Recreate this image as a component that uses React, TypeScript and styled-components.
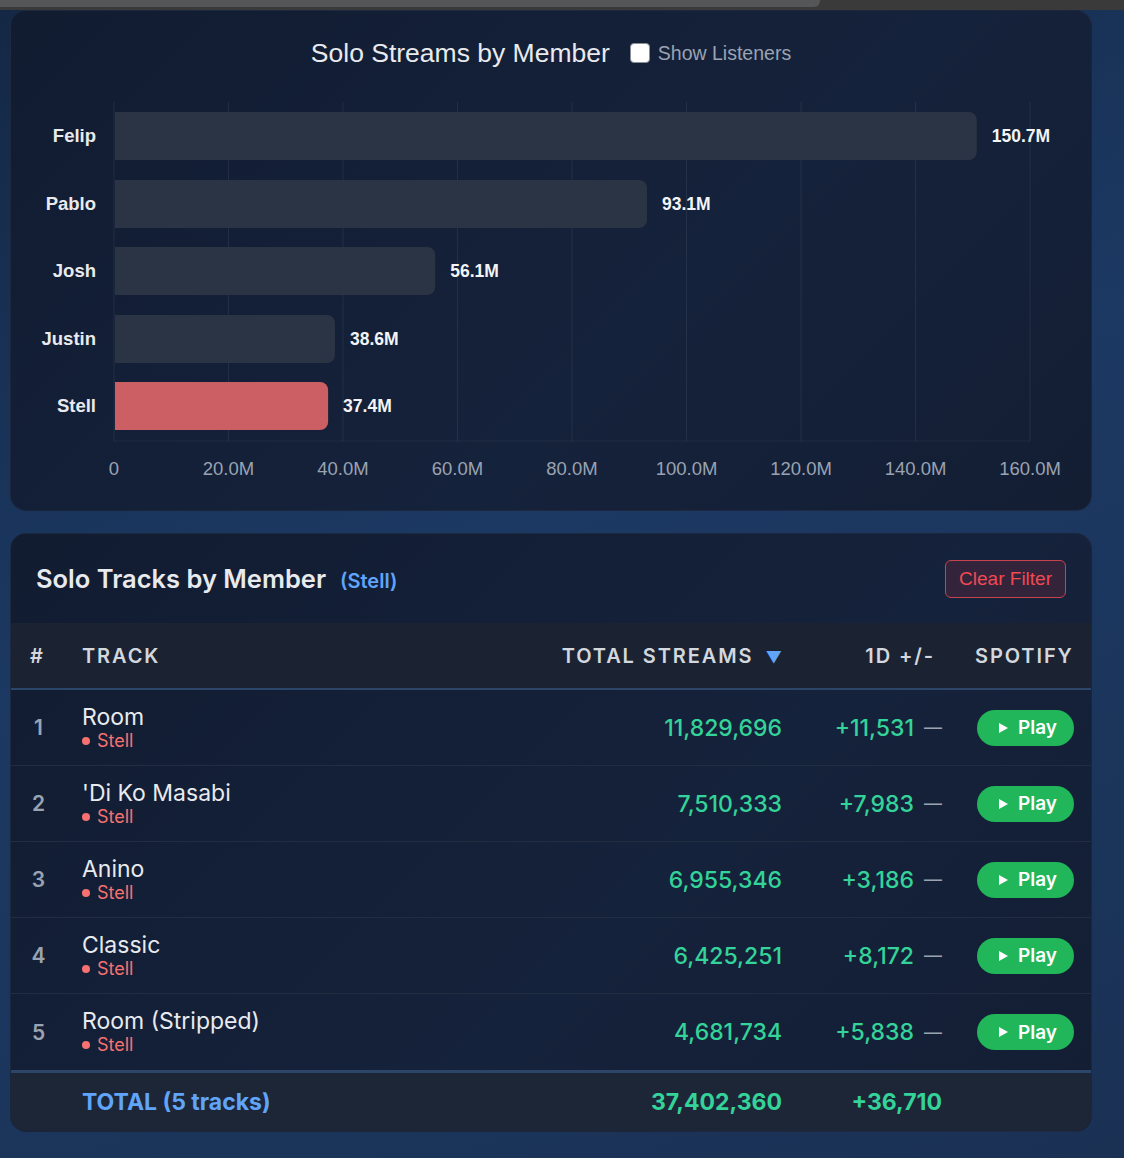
import styled, { createGlobalStyle } from 'styled-components';

const GlobalStyle = createGlobalStyle`
  * { box-sizing: border-box; }
  html, body {
    margin: 0;
    padding: 0;
  }
  body {
    min-height: 1158px;
    background: linear-gradient(160deg, #142845 0%, #1c3963 45%, #1a3154 100%);
    font-family: Inter, "Liberation Sans", sans-serif;
    color: #e5e7eb;
  }
`;

const ScrollStrip = styled.div`
  height: 10px;
  background: #3a3a3b;
  display: flex;
`;

const ScrollThumb = styled.div`
  width: 820px;
  height: 7px;
  background: #555658;
  border-bottom-right-radius: 6px;
`;

const Page = styled.main`
  padding: 0 32px 27px 10px;
  display: flex;
  flex-direction: column;
  gap: 22px;
`;

const Card = styled.section<{ $height?: number }>`
  height: ${p => (p.$height ? `${p.$height}px` : 'auto')};
  background: linear-gradient(135deg, #111c31 0%, #15223b 60%, #131e33 100%);
  border: 1px solid rgba(255, 255, 255, 0.04);
  border-radius: 16px;
  overflow: hidden;
`;

const ChartHead = styled.div`
  display: flex;
  align-items: center;
  justify-content: center;
  gap: 20px;
  padding-top: 26px;
  height: 58px;
  margin-bottom: 32px;
  font-family: "Liberation Sans", Arial, sans-serif;
`;

const ChartTitle = styled.h2`
  margin: 0;
  font-size: 26.5px;
  font-weight: 400;
  color: #e8eaee;
`;

const Toggle = styled.label`
  display: flex;
  align-items: center;
  gap: 8px;
  font-size: 19.5px;
  color: #9aa3b2;
`;

const Check = styled.input`
  appearance: none;
  margin: 0;
  width: 20px;
  height: 20px;
  border-radius: 4px;
  background: #fff;
  border: 1px solid #8a8f98;
`;

const ChartSvg = styled.svg`
  display: block;
  font-family: "Liberation Sans", Arial, sans-serif;
`;

const TableHead = styled.div`
  display: flex;
  align-items: center;
  justify-content: space-between;
  height: 89px;
  padding: 0 25px 0 25px;
`;

const TitleGroup = styled.div`
  display: flex;
  align-items: baseline;
  gap: 14px;
`;

const TableTitle = styled.h2`
  margin: 0;
  font-size: 25.5px;
  font-weight: 600;
  color: #e8eaee;
`;

const Filter = styled.span`
  font-size: 20px;
  font-weight: 600;
  color: #60a5fa;
`;

const ClearButton = styled.button`
  height: 38px;
  padding: 0 13px;
  border-radius: 6px;
  border: 1px solid #c8444c;
  background: rgba(190, 50, 60, 0.18);
  color: #f04a52;
  font-family: "Liberation Sans", Arial, sans-serif;
  font-size: 19px;
`;

const Row = styled.div<{ $kind?: 'head' | 'body' | 'total' }>`
  display: grid;
  grid-template-columns: 52px 1fr 240px 160px 132px;
  align-items: center;
  padding: 0 17px 0 19px;
  height: ${p => (p.$kind === 'head' ? '67px' : p.$kind === 'total' ? '61px' : '76px')};
  background: ${p => (p.$kind === 'head' ? '#1b2333' : p.$kind === 'total' ? '#1d2637' : 'transparent')};
  border-bottom: ${p => (p.$kind === 'head' ? '2px solid #2b4668' : p.$kind === 'total' ? 'none' : '1px solid #222d42')};
  border-top: ${p => (p.$kind === 'total' ? '3px solid #2b4668' : 'none')};
  &:nth-last-child(2) {
    border-bottom: none;
  }
`;

const HeadCell = styled.div<{ $align?: 'left' | 'right'; $inset?: number }>`
  white-space: nowrap;
  font-size: 20px;
  font-weight: 600;
  letter-spacing: 1.9px;
  color: #d3d7de;
  text-align: ${p => p.$align ?? 'left'};
  padding-right: ${p => p.$inset ?? 0}px;
`;

const SortArrow = styled.span`
  color: #60a5fa;
  font-size: 16px;
  margin-left: 12px;
  letter-spacing: 0;
`;

const SpotifyHead = styled(HeadCell)`
  padding-left: 33px;
`;

const Num = styled.div`
  width: 17px;
  text-align: center;
  font-size: 21px;
  font-weight: 600;
  color: #9aa3b2;
`;

const Track = styled.div`
  display: flex;
  flex-direction: column;
`;

const TrackName = styled.span`
  font-size: 23px;
  line-height: 26px;
  color: #e8eaee;
`;

const Artist = styled.span`
  display: flex;
  align-items: center;
  gap: 7px;
  font-size: 18px;
  line-height: 22px;
  color: #f87171;
  &::before {
    content: '';
    width: 8px;
    height: 8px;
    border-radius: 50%;
    background: #f87171;
  }
`;

const Streams = styled.div<{ $bold?: boolean }>`
  text-align: right;
  font-size: 23px;
  font-weight: ${p => (p.$bold ? 700 : 500)};
  color: #34d399;
`;

const Change = styled.div`
  display: flex;
  justify-content: flex-end;
  align-items: center;
  gap: 10px;
  font-size: 23px;
  font-weight: 500;
  color: #34d399;
`;

const Dash = styled.span`
  color: #9aa3b2;
  font-size: 18px;
  font-weight: 400;
`;

const SpotifyCell = styled.div`
  padding-left: 35px;
`;

const PlayButton = styled.button`
  display: flex;
  align-items: center;
  gap: 10px;
  width: 97px;
  height: 36px;
  padding: 0 0 0 22px;
  border: none;
  border-radius: 18px;
  background: #21b659;
  color: #fff;
  font-family: Inter, "Liberation Sans", sans-serif;
  font-size: 19px;
  font-weight: 600;
`;

const TotalLabel = styled.div`
  font-size: 23px;
  font-weight: 700;
  color: #60a5fa;
`;

const members = [
  { name: 'Felip', value: 150.7, selected: false },
  { name: 'Pablo', value: 93.1, selected: false },
  { name: 'Josh', value: 56.1, selected: false },
  { name: 'Justin', value: 38.6, selected: false },
  { name: 'Stell', value: 37.4, selected: true },
];

const tracks = [
  { title: 'Room', streams: '11,829,696', change: '+11,531' },
  { title: "'Di Ko Masabi", streams: '7,510,333', change: '+7,983' },
  { title: 'Anino', streams: '6,955,346', change: '+3,186' },
  { title: 'Classic', streams: '6,425,251', change: '+8,172' },
  { title: 'Room (Stripped)', streams: '4,681,734', change: '+5,838' },
];

// chart geometry, svg coords = page coords shifted by (11, 101)
const X0 = 103;
const PX_PER_M = 916 / 160;
const BAR_H = 48;
const barTops = [11, 79, 146, 214, 281];

const barPath = (x0: number, x1: number, y: number, h: number, r: number) =>
  `M${x0} ${y}H${x1 - r}A${r} ${r} 0 0 1 ${x1} ${y + r}V${y + h - r}A${r} ${r} 0 0 1 ${x1 - r} ${y + h}H${x0}Z`;

const StreamsChart = () => {
  const ticks = Array.from({ length: 9 }, (_, i) => i * 20);
  return (
    <ChartSvg width={1080} height={395} viewBox="0 0 1080 395">
      {ticks.map(t => (
        <line
          key={t}
          x1={X0 + t * PX_PER_M}
          x2={X0 + t * PX_PER_M}
          y1={1}
          y2={340}
          stroke="rgba(255,255,255,0.07)"
          strokeWidth={1}
        />
      ))}
      <line x1={X0} x2={X0 + 160 * PX_PER_M} y1={340} y2={340} stroke="rgba(255,255,255,0.05)" />
      {members.map((m, i) => {
        const y = barTops[i];
        const x1 = X0 + m.value * PX_PER_M;
        return (
          <g key={m.name}>
            <path d={barPath(X0 + 1, x1, y, BAR_H, 8)} fill={m.selected ? '#cc5f64' : '#2b3444'} />
            <text x={85} y={y + 30} textAnchor="end" fontSize={18.5} fontWeight={700} fill="#e8eaee">
              {m.name}
            </text>
            <text x={x1 + 15} y={y + 30} fontSize={17.5} fontWeight={700} fill="#f3f4f6">
              {m.value.toFixed(1)}M
            </text>
          </g>
        );
      })}
      {ticks.map(t => (
        <text
          key={t}
          x={X0 + t * PX_PER_M}
          y={374}
          textAnchor="middle"
          fontSize={18.5}
          fill="#9aa3b2"
        >
          {t === 0 ? '0' : `${t.toFixed(1)}M`}
        </text>
      ))}
    </ChartSvg>
  );
};

const PlayIcon = () => (
  <svg width="9" height="10" viewBox="0 0 9 10">
    <path d="M0 0L9 5L0 10Z" fill="#fff" />
  </svg>
);

const App = () => (
  <>
    <GlobalStyle />
    <ScrollStrip>
      <ScrollThumb />
    </ScrollStrip>
    <Page>
      <Card $height={501}>
        <ChartHead>
          <ChartTitle>Solo Streams by Member</ChartTitle>
          <Toggle>
            <Check type="checkbox" />
            Show Listeners
          </Toggle>
        </ChartHead>
        <StreamsChart />
      </Card>
      <Card>
        <TableHead>
          <TitleGroup>
            <TableTitle>Solo Tracks by Member</TableTitle>
            <Filter>(Stell)</Filter>
          </TitleGroup>
          <ClearButton>Clear Filter</ClearButton>
        </TableHead>
        <Row $kind="head">
          <HeadCell>#</HeadCell>
          <HeadCell>TRACK</HeadCell>
          <HeadCell $align="right">
            TOTAL STREAMS<SortArrow>▼</SortArrow>
          </HeadCell>
          <HeadCell $align="right" $inset={7}>
            1D +/-
          </HeadCell>
          <SpotifyHead>SPOTIFY</SpotifyHead>
        </Row>
        {tracks.map((t, i) => (
          <Row key={t.title}>
            <Num>{i + 1}</Num>
            <Track>
              <TrackName>{t.title}</TrackName>
              <Artist>Stell</Artist>
            </Track>
            <Streams>{t.streams}</Streams>
            <Change>
              {t.change}
              <Dash>—</Dash>
            </Change>
            <SpotifyCell>
              <PlayButton>
                <PlayIcon />
                Play
              </PlayButton>
            </SpotifyCell>
          </Row>
        ))}
        <Row $kind="total">
          <div />
          <TotalLabel>TOTAL (5 tracks)</TotalLabel>
          <Streams $bold>37,402,360</Streams>
          <Streams $bold>+36,710</Streams>
          <div />
        </Row>
      </Card>
    </Page>
  </>
);

export default App;
